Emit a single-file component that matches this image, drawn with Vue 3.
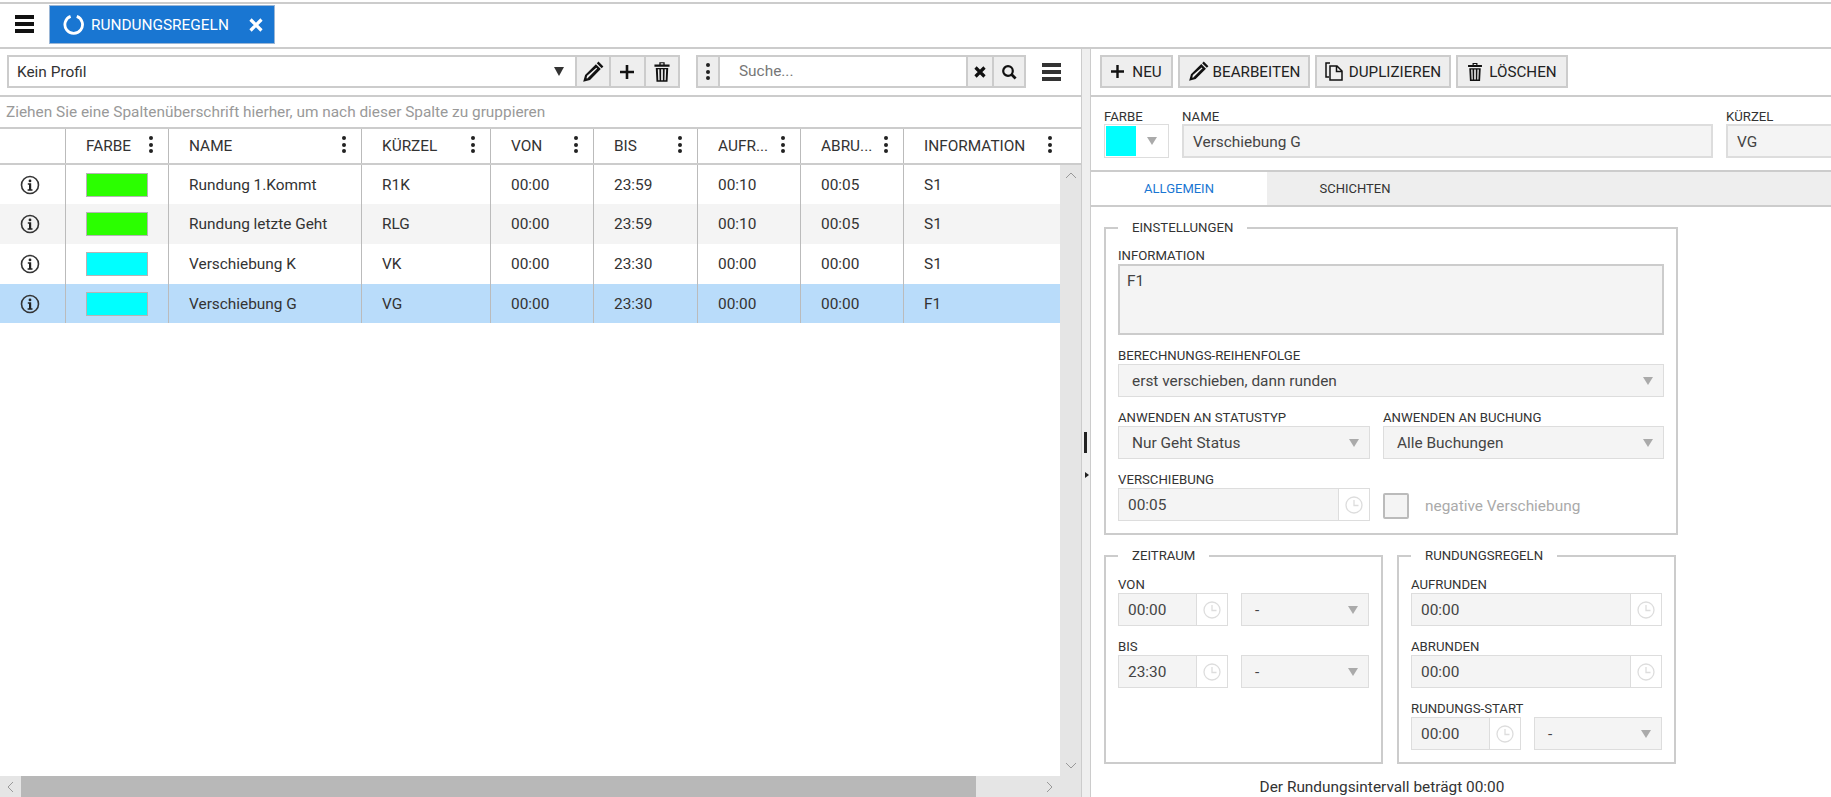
<template>
  <div class="app">
    <header class="topbar">
      <button class="menu-btn">
        <svg width="19" height="18" viewBox="0 0 19 18"><path d="M0 0h19v4H0zM0 7h19v4H0zM0 14h19v4H0z" fill="#111" /></svg>
      </button>
      <div class="app-tab">
        <svg class="tab-ring" width="21" height="21" viewBox="0 0 21 21" fill="none" stroke="#fff" stroke-width="2.8"><path d="M7.600 2.400a8.800 8.800 0 1 0 6.200 0" /></svg>
        <span class="tab-title">RUNDUNGSREGELN</span>
        <svg class="tab-close" width="14" height="14" viewBox="0 0 14 14" stroke="#fff" stroke-width="3.2"><path d="M1.500 1.500l11 11M12.500 1.500l-11 11" /></svg>
      </div>
    </header>

    <main class="split">
      <section class="left">
        <div class="toolbar">
          <div class="profile-select">
            <span>Kein Profil</span>
            <i class="caret dark"></i>
          </div>
          <div class="tool-btns">
            <button class="tool-btn">
              <svg width="22" height="22" viewBox="0 0 22 22"><path :d="pencilPath" fill="#111" fill-rule="evenodd" /></svg>
            </button>
            <button class="tool-btn">
              <svg width="14" height="14" viewBox="0 0 14 14"><path d="M5.700 0h2.600v5.700H14v2.600H8.300V14H5.700V8.300H0V5.700h5.700z" fill="#111" /></svg>
            </button>
            <button class="tool-btn">
              <svg width="16" height="20" viewBox="0 0 18 22"><path :d="trashPath" fill="#111" fill-rule="evenodd" /></svg>
            </button>
          </div>
          <div class="search">
            <button class="search-kebab"><span class="kebab"><b></b><b></b><b></b></span></button>
            <span class="search-input">Suche...</span>
            <button class="search-clear">
              <svg width="12" height="12" viewBox="0 0 12 12" stroke="#111" stroke-width="3.200"><path d="M1.500 1.500l9 9M10.500 1.500l-9 9" /></svg>
            </button>
            <button class="search-go">
              <svg width="16" height="16" viewBox="0 0 16 16" fill="none" stroke="#111" stroke-width="2.200"><circle cx="7" cy="7" r="4.800" /><path d="M10.600 10.600l4 4" stroke-width="2.800" /></svg>
            </button>
          </div>
          <svg class="list-menu" width="19" height="18" viewBox="0 0 19 18"><path d="M0 0h19v4H0zM0 7h19v4H0zM0 14h19v4H0z" fill="#333" /></svg>
        </div>

        <div class="group-hint">Ziehen Sie eine Spaltenüberschrift hierher, um nach dieser Spalte zu gruppieren</div>

        <div class="grid">
          <div class="grid-head">
            <div class="cell head-cell" v-for="col in columns" :key="col.key" :style="{ width: col.width + 'px' }">
              <span class="head-text">{{ col.label }}</span>
              <span v-if="col.label" class="kebab"><b></b><b></b><b></b></span>
            </div>
          </div>

          <div class="grid-body">
            <div class="rows">
              <div
                v-for="(row, i) in rows"
                :key="row.short"
                class="row"
                :class="{ alt: i === 1, selected: i === 3 }"
              >
                <div class="cell info-cell" style="width: 66px">
                  <svg width="20" height="20" viewBox="0 0 20 20">
                    <circle cx="10" cy="10" r="8.500" fill="none" stroke="#333" stroke-width="1.600" />
                    <circle cx="10" cy="5.900" r="1.400" fill="#222" />
                    <path d="M7.800 8.300h3.400v6h1.300v1.400H7.600v-1.400h1.400V9.700H7.800z" fill="#222" />
                  </svg>
                </div>
                <div class="cell" style="width: 103px">
                  <span class="swatch" :style="{ background: row.color }"></span>
                </div>
                <div class="cell" style="width: 193px">{{ row.name }}</div>
                <div class="cell" style="width: 129px">{{ row.short }}</div>
                <div class="cell" style="width: 103px">{{ row.from }}</div>
                <div class="cell" style="width: 104px">{{ row.to }}</div>
                <div class="cell" style="width: 103px">{{ row.up }}</div>
                <div class="cell" style="width: 103px">{{ row.down }}</div>
                <div class="cell last" style="width: 156px">{{ row.info }}</div>
              </div>
            </div>
            <div class="vscroll">
              <svg width="12" height="7" viewBox="0 0 12 7" fill="none" stroke="#999"><path d="M1 6l5-5 5 5" /></svg>
              <svg width="12" height="7" viewBox="0 0 12 7" fill="none" stroke="#999"><path d="M1 1l5 5 5-5" /></svg>
            </div>
          </div>

          <div class="hscroll">
            <span class="hs-arrow">
              <svg width="7" height="12" viewBox="0 0 7 12" fill="none" stroke="#999"><path d="M6 1L1 6l5 5" /></svg>
            </span>
            <span class="hs-thumb"></span>
            <span class="hs-arrow hs-next">
              <svg width="7" height="12" viewBox="0 0 7 12" fill="none" stroke="#999"><path d="M1 1l5 5-5 5" /></svg>
            </span>
          </div>
        </div>
      </section>

      <div class="splitter">
        <span class="grip"></span>
        <i class="grip-arrow"></i>
      </div>

      <section class="right">
        <div class="actions">
          <button class="action">
            <svg width="13" height="13" viewBox="0 0 14 14"><path d="M5.700 0h2.600v5.700H14v2.600H8.300V14H5.700V8.300H0V5.700h5.700z" fill="#111" /></svg>
            <span class="gap-8">NEU</span>
          </button>
          <button class="action">
            <svg width="21" height="21" viewBox="0 0 22 22"><path :d="pencilPath" fill="#111" fill-rule="evenodd" /></svg>
            <span>BEARBEITEN</span>
          </button>
          <button class="action">
            <svg width="18" height="19" viewBox="0 0 18 19" fill="none" stroke="#111" stroke-width="1.500"><path d="M5 1H1v14h3" /><path d="M5 4h7l5 5v9H5zM11.500 4v5.500H17" /></svg>
            <span class="gap-6">DUPLIZIEREN</span>
          </button>
          <button class="action">
            <svg width="16" height="18" viewBox="0 0 18 22"><path :d="trashPath" fill="#111" fill-rule="evenodd" /></svg>
            <span class="gap-6">LÖSCHEN</span>
          </button>
        </div>

        <div class="head-form">
          <div class="field color-field">
            <label>FARBE</label>
            <div class="color-select">
              <span class="color-box"></span>
              <i class="caret"></i>
            </div>
          </div>
          <div class="field name-field">
            <label>NAME</label>
            <div class="input">Verschiebung G</div>
          </div>
          <div class="field short-field">
            <label>KÜRZEL</label>
            <div class="input">VG</div>
          </div>
        </div>

        <div class="tabs">
          <div class="tab active">ALLGEMEIN</div>
          <div class="tab">SCHICHTEN</div>
        </div>

        <div class="form">
          <fieldset class="box settings">
            <legend>EINSTELLUNGEN</legend>
            <div class="field">
              <label>INFORMATION</label>
              <div class="input textarea">F1</div>
            </div>
            <div class="field">
              <label>BERECHNUNGS-REIHENFOLGE</label>
              <div class="input select">erst verschieben, dann runden<i class="caret"></i></div>
            </div>
            <div class="pair">
              <div class="field">
                <label>ANWENDEN AN STATUSTYP</label>
                <div class="input select">Nur Geht Status<i class="caret"></i></div>
              </div>
              <div class="field">
                <label>ANWENDEN AN BUCHUNG</label>
                <div class="input select">Alle Buchungen<i class="caret"></i></div>
              </div>
            </div>
            <div class="pair">
              <div class="field">
                <label>VERSCHIEBUNG</label>
                <div class="time">
                  <span class="time-value">00:05</span>
                  <span class="time-btn"><svg width="18" height="18" viewBox="0 0 18 18" fill="none" stroke="#ddd" stroke-width="1.300"><circle cx="9" cy="9" r="8" /><path d="M9 4v5.500h4.500" /></svg></span>
                </div>
              </div>
              <div class="check-row">
                <span class="checkbox"></span>
                <span class="check-label">negative Verschiebung</span>
              </div>
            </div>
          </fieldset>

          <div class="lower">
            <fieldset class="box">
              <legend>ZEITRAUM</legend>
              <div class="field" v-for="item in period" :key="item.label">
                <label>{{ item.label }}</label>
                <div class="time-pair">
                  <div class="time small">
                    <span class="time-value">{{ item.value }}</span>
                    <span class="time-btn"><svg width="18" height="18" viewBox="0 0 18 18" fill="none" stroke="#ddd" stroke-width="1.300"><circle cx="9" cy="9" r="8" /><path d="M9 4v5.500h4.500" /></svg></span>
                  </div>
                  <div class="input select">-<i class="caret"></i></div>
                </div>
              </div>
            </fieldset>
            <fieldset class="box">
              <legend>RUNDUNGSREGELN</legend>
              <div class="field" v-for="item in rounding" :key="item">
                <label>{{ item }}</label>
                <div class="time">
                  <span class="time-value">00:00</span>
                  <span class="time-btn"><svg width="18" height="18" viewBox="0 0 18 18" fill="none" stroke="#ddd" stroke-width="1.300"><circle cx="9" cy="9" r="8" /><path d="M9 4v5.500h4.500" /></svg></span>
                </div>
              </div>
              <div class="field">
                <label>RUNDUNGS-START</label>
                <div class="time-pair">
                  <div class="time small">
                    <span class="time-value">00:00</span>
                    <span class="time-btn"><svg width="18" height="18" viewBox="0 0 18 18" fill="none" stroke="#ddd" stroke-width="1.300"><circle cx="9" cy="9" r="8" /><path d="M9 4v5.500h4.500" /></svg></span>
                  </div>
                  <div class="input select">-<i class="caret"></i></div>
                </div>
              </div>
            </fieldset>
          </div>

          <div class="interval">Der Rundungsintervall beträgt 00:00</div>
        </div>
      </section>
    </main>
  </div>
</template>

<script setup>
const pencilPath = 'M16.500 .6l4.900 4.900-1.700 1.700-4.900-4.900zM13.900 3.200l4.900 4.900L8 18.900 1.200 20.800 3.100 14zM5.100 14.700l-.6 2.600 .8 .2 9.900-9.900-.9-.9z'
const trashPath = 'M6 0h6v2.500h5.500V5H.5V2.500H6zM7.500 1.200v1.300h3V1.200zM2 6.500h14l-.8 15.500H2.800zM4.300 8l.5 12.300h1.500L6 8zM8 8v12.300h2V8zM12 8l-.3 12.300h1.500L13.700 8z'

const columns = [
  { key: 'info', label: '', width: 66 },
  { key: 'color', label: 'FARBE', width: 103 },
  { key: 'name', label: 'NAME', width: 193 },
  { key: 'short', label: 'KÜRZEL', width: 129 },
  { key: 'from', label: 'VON', width: 103 },
  { key: 'to', label: 'BIS', width: 104 },
  { key: 'up', label: 'AUFR...', width: 103 },
  { key: 'down', label: 'ABRU...', width: 103 },
  { key: 'note', label: 'INFORMATION', width: 177 },
]

const rows = [
  { name: 'Rundung 1.Kommt', short: 'R1K', from: '00:00', to: '23:59', up: '00:10', down: '00:05', info: 'S1', color: '#2bff00' },
  { name: 'Rundung letzte Geht', short: 'RLG', from: '00:00', to: '23:59', up: '00:10', down: '00:05', info: 'S1', color: '#2bff00' },
  { name: 'Verschiebung K', short: 'VK', from: '00:00', to: '23:30', up: '00:00', down: '00:00', info: 'S1', color: '#00ffff' },
  { name: 'Verschiebung G', short: 'VG', from: '00:00', to: '23:30', up: '00:00', down: '00:00', info: 'F1', color: '#00ffff' },
]

const period = [
  { label: 'VON', value: '00:00' },
  { label: 'BIS', value: '23:30' },
]

const rounding = ['AUFRUNDEN', 'ABRUNDEN']
</script>

<style>
html, body {
  margin: 0;
  height: 100%;
  overflow: hidden;
  background: #fff;
}
</style>

<style scoped>
.app {
  width: 1831px;
  height: 797px;
  display: flex;
  flex-direction: column;
  overflow: hidden;
  font-family: Roboto, "Liberation Sans", sans-serif;
  font-size: 15.4px;
  color: #333;
  background: #fff;
}

button {
  padding: 0;
  font: inherit;
  color: inherit;
  cursor: pointer;
}

.topbar {
  box-sizing: border-box;
  height: 47px;
  margin-top: 2px;
  flex: none;
  display: flex;
  align-items: flex-start;
  border-top: 2px solid #ccc;
  border-bottom: 2px solid #ccc;
}

.menu-btn {
  width: 48px;
  height: 38px;
  margin-top: 1px;
  border: 0;
  background: transparent;
  display: flex;
  align-items: center;
  justify-content: center;
}

.app-tab {
  box-sizing: border-box;
  width: 226px;
  height: 39px;
  margin: 1px 0 0 1px;
  padding: 0 11px 0 13px;
  display: flex;
  align-items: center;
  background: #1976d2;
  border: 1px solid #9ab6d6;
  color: #fff;
}

.tab-title {
  margin-left: 7px;
  flex: 1;
}

.split {
  flex: 1;
  min-height: 0;
  display: flex;
}

.left {
  width: 1081px;
  flex: none;
  display: flex;
  flex-direction: column;
}

.toolbar {
  box-sizing: border-box;
  height: 48px;
  flex: none;
  padding: 6px 0 0 7px;
  display: flex;
  align-items: flex-start;
  border-bottom: 2px solid #ccc;
}

.profile-select {
  box-sizing: border-box;
  width: 570px;
  height: 33px;
  padding: 0 11px 0 8px;
  display: flex;
  align-items: center;
  justify-content: space-between;
  border: 2px solid #ccc;
}

.tool-btns {
  display: flex;
  height: 33px;
}

.tool-btn {
  box-sizing: border-box;
  width: 34.33px;
  height: 33px;
  border: 1px solid #ccc;
  border-width: 2px 2px 2px 0;
  background: #eee;
  display: flex;
  align-items: center;
  justify-content: center;
}

.search {
  margin-left: 16px;
  height: 33px;
  width: 330px;
  box-sizing: border-box;
  display: flex;
  border: 2px solid #ccc;
}

.search button {
  border: 0;
  background: #eee;
  display: flex;
  align-items: center;
  justify-content: center;
}

.search-kebab {
  box-sizing: border-box;
  width: 22px;
  border-right: 2px solid #ccc !important;
}

.search-input {
  flex: 1;
  padding-left: 19px;
  line-height: 29px;
  color: #777;
}

.search-clear {
  box-sizing: border-box;
  width: 26px;
  border-left: 2px solid #ccc !important;
}

.search-go {
  box-sizing: border-box;
  width: 32px;
  border-left: 2px solid #ccc !important;
}

.list-menu {
  margin: 8px 0 0 16px;
}

.group-hint {
  box-sizing: border-box;
  height: 32px;
  flex: none;
  padding: 0 6px;
  display: flex;
  align-items: center;
  color: #999;
  border-bottom: 2px solid #ccc;
}

.grid {
  flex: 1;
  min-height: 0;
  display: flex;
  flex-direction: column;
}

.grid-head {
  box-sizing: border-box;
  height: 36px;
  flex: none;
  display: flex;
  border-bottom: 2px solid #ccc;
}

.cell {
  box-sizing: border-box;
  flex: none;
  height: 100%;
  padding: 0 10px 0 20px;
  display: flex;
  align-items: center;
  border-right: 1px solid #bbb;
  white-space: nowrap;
}

.cell.last {
  border-right: 0;
}

.head-cell {
  justify-content: space-between;
  padding-right: 15px;
}

.head-cell:last-child {
  border-right: 0;
  padding-right: 29px;
}

.head-cell .kebab {
  margin-bottom: 3px;
}

.kebab {
  display: flex;
  flex-direction: column;
  gap: 2.5px;
}

.kebab b {
  width: 4px;
  height: 4px;
  border-radius: 50%;
  background: #222;
}

.grid-body {
  flex: 1;
  min-height: 0;
  display: flex;
}

.rows {
  flex: 1;
  overflow: hidden;
}

.row {
  height: 40px;
  display: flex;
}

.row:first-child {
  height: 39px;
}

.row.alt {
  background: #f4f4f4;
}

.row.selected {
  height: 39px;
  background: #b9dcfa;
}

.info-cell {
  padding: 0 6px 0 0;
  justify-content: center;
}

.swatch {
  box-sizing: border-box;
  width: 62px;
  height: 24px;
  border: 1px solid #b5b5b5;
}

.vscroll {
  width: 21px;
  flex: none;
  padding: 7px 0;
  box-sizing: border-box;
  display: flex;
  flex-direction: column;
  align-items: center;
  justify-content: space-between;
  background: #e5e5e5;
}

.hscroll {
  height: 21px;
  flex: none;
  display: flex;
  background: #e5e5e5;
}

.hs-arrow {
  width: 21px;
  flex: none;
  display: flex;
  align-items: center;
  justify-content: center;
}

.hs-next {
  margin-left: auto;
  width: 105px;
  justify-content: flex-end;
  padding-right: 28px;
  box-sizing: border-box;
}

.hs-thumb {
  width: 955px;
  flex: none;
  background: #b8b8b8;
}

.splitter {
  position: relative;
  box-sizing: border-box;
  width: 10px;
  flex: none;
  background: #efefef;
  border-left: 1px solid #ccc;
  border-right: 1px solid #ccc;
}

.grip {
  position: absolute;
  left: 2px;
  top: 383px;
  width: 3px;
  height: 21px;
  background: #222;
}

.grip-arrow {
  position: absolute;
  left: 3px;
  top: 423px;
  border-left: 4px solid #222;
  border-top: 3px solid transparent;
  border-bottom: 3px solid transparent;
}

.right {
  flex: 1;
  min-width: 0;
  display: flex;
  flex-direction: column;
}

.actions {
  box-sizing: border-box;
  height: 48px;
  flex: none;
  padding: 6px 0 0 9px;
  display: flex;
  gap: 5px;
  border-bottom: 2px solid #ccc;
}

.action {
  box-sizing: border-box;
  height: 33px;
  display: flex;
  align-items: center;
  justify-content: center;
  gap: 4px;
  border: 2px solid #ccc;
  background: #eee;
  font-size: 15.2px;
  color: #222;
}

.action:nth-child(1) {
  width: 73px;
}

.action:nth-child(2) {
  width: 132px;
}

.action:nth-child(3) {
  width: 136px;
}

.action:nth-child(4) {
  width: 112px;
}

.gap-8 {
  margin-left: 4px;
}

.gap-6 {
  margin-left: 2px;
}

.field {
  display: flex;
  flex-direction: column;
  min-width: 0;
}

.field label {
  height: 15px;
  line-height: 15px;
  font-size: 13.2px;
  color: #333;
  margin-bottom: 1px;
  white-space: nowrap;
}

.head-form {
  box-sizing: border-box;
  height: 75px;
  flex: none;
  padding: 12px 0 0 13px;
  display: flex;
  gap: 13px;
  border-bottom: 2px solid #ccc;
}

.head-form .field label {
  margin-bottom: 0;
}

.color-field {
  width: 65px;
  flex: none;
}

.name-field {
  width: 531px;
  flex: none;
}

.short-field {
  flex: 1;
  margin-right: -30px;
}

.color-select {
  box-sizing: border-box;
  height: 34px;
  padding: 1px;
  display: flex;
  align-items: center;
  border: 1px solid #ddd;
}

.color-box {
  width: 30px;
  height: 100%;
  background: #00ffff;
}

.color-select .caret {
  margin-left: 11px;
}

.input {
  box-sizing: border-box;
  position: relative;
  height: 33px;
  padding: 0 10px;
  display: flex;
  align-items: center;
  background: #f4f4f4;
  border: 1px solid #ddd;
  color: #444;
}

.name-field .input,
.short-field .input {
  height: 34px;
  padding: 1px 9px 0;
  border-width: 2px;
}

.textarea {
  height: 71px;
  align-items: flex-start;
  padding: 6px 7px 0;
  border: 2px solid #ccc;
}

.select {
  padding-left: 13px;
}

.caret {
  flex: none;
  width: 0;
  height: 0;
  border-left: 5px solid transparent;
  border-right: 5px solid transparent;
  border-top: 8px solid #aaa;
}

.caret.dark {
  border-top-color: #333;
  border-top-width: 9px;
}

.select .caret {
  position: absolute;
  right: 10px;
  top: 12px;
}

.tabs {
  box-sizing: border-box;
  height: 35px;
  flex: none;
  display: flex;
  background: #eee;
  border-bottom: 2px solid #ccc;
}

.tab {
  box-sizing: border-box;
  width: 176px;
  display: flex;
  align-items: center;
  justify-content: center;
  font-size: 13px;
  color: #333;
}

.tab.active {
  background: #fff;
  color: #1976d2;
}

.form {
  padding: 13px 0 0 13px;
  width: 574px;
}

.box {
  margin: 0;
  padding: 14px 12px 0;
  border: 2px solid #ccc;
  box-sizing: border-box;
  min-width: 0;
}

.box legend {
  padding: 0 14px;
  font-size: 13.2px;
  line-height: 15px;
  color: #333;
}

.settings {
  height: 315px;
  padding-top: 13px;
}

.box > .field + .field,
.box > .field + .pair,
.box > .pair + .pair {
  margin-top: 13px;
}

.pair {
  display: flex;
  gap: 13px;
}

.pair > .field:first-child {
  width: 252px;
  flex: none;
}

.pair > .field:last-child {
  flex: 1;
}

.time {
  box-sizing: border-box;
  height: 33px;
  display: flex;
  border: 1px solid #ddd;
}

.time-value {
  flex: 1;
  min-width: 0;
  padding-left: 9px;
  line-height: 33px;
  background: #f4f4f4;
  color: #444;
}

.time-btn {
  box-sizing: border-box;
  width: 31px;
  flex: none;
  display: flex;
  align-items: center;
  justify-content: center;
  border-left: 1px solid #ddd;
}

.check-row {
  display: flex;
  align-items: center;
  align-self: flex-start;
  gap: 16px;
  padding-top: 21px;
}

.checkbox {
  box-sizing: border-box;
  width: 26px;
  height: 26px;
  border: 2px solid #bbb;
  background: #f4f4f4;
  border-radius: 2px;
}

.check-label {
  color: #aaa;
}

.lower {
  display: flex;
  gap: 14px;
  margin-top: 13px;
}

.lower .box {
  width: 279px;
  height: 216px;
  flex: none;
}

.time-pair {
  display: flex;
  gap: 13px;
}

.time.small {
  width: 110px;
  flex: none;
}

.time-pair .select {
  flex: 1;
  min-width: 0;
}

.interval {
  margin-top: 15px;
  padding-right: 18px;
  line-height: 17px;
  text-align: center;
}
</style>
